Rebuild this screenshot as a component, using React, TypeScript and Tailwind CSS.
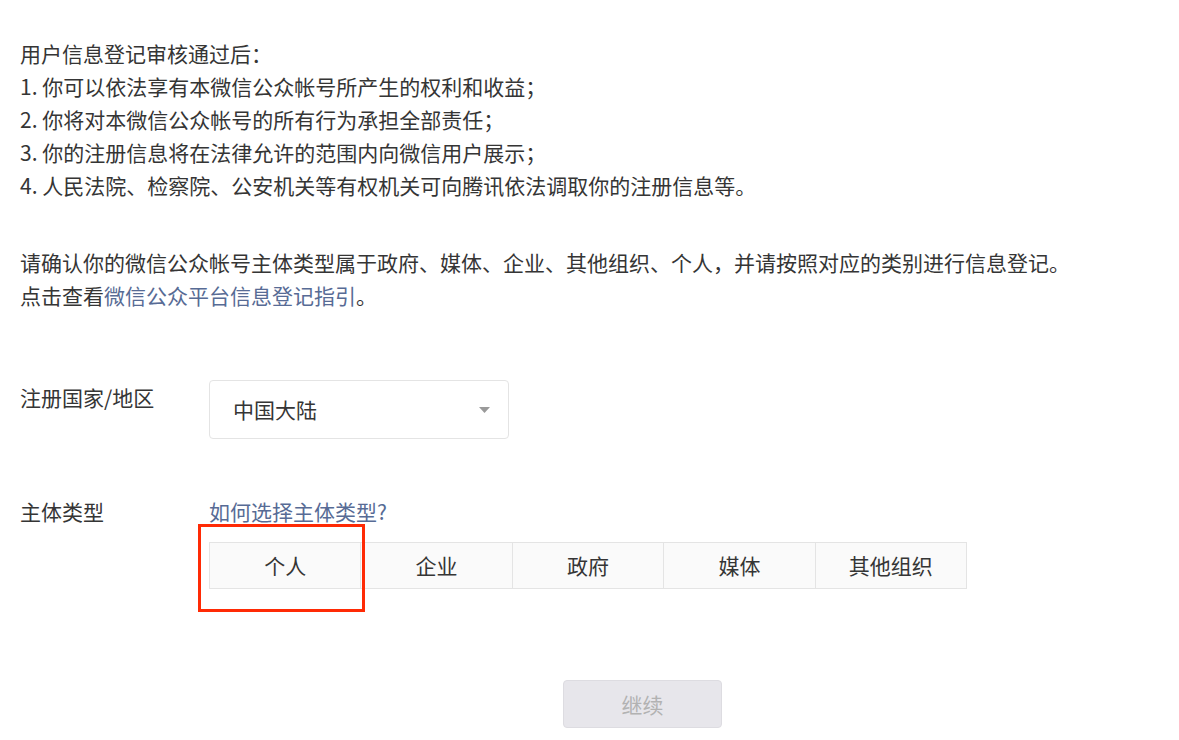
import React from "react";

const tabs = ["个人", "企业", "政府", "媒体", "其他组织"];

export default function App() {
  return (
    <div
      className="w-[1179px] h-[740px] bg-white text-[#353535] overflow-hidden relative"
      style={{ fontFamily: '"Noto Sans CJK SC", "Noto Sans", sans-serif' }}
    >
      <div className="pl-[20px] pt-[37px] text-[21px] leading-[33px]">
        <p>用户信息登记审核通过后：</p>
        <p>1. 你可以依法享有本微信公众帐号所产生的权利和收益；</p>
        <p>2. 你将对本微信公众帐号的所有行为承担全部责任；</p>
        <p>3. 你的注册信息将在法律允许的范围内向微信用户展示；</p>
        <p>4. 人民法院、检察院、公安机关等有权机关可向腾讯依法调取你的注册信息等。</p>

        <p className="mt-[44px]">请确认你的微信公众帐号主体类型属于政府、媒体、企业、其他组织、个人，并请按照对应的类别进行信息登记。</p>
        <p>
          点击查看<span className="text-[#576b95]">微信公众平台信息登记指引</span>。
        </p>

        <div className="mt-[68px] flex">
          <div className="w-[189px] pt-[1px]">注册国家/地区</div>
          <div className="w-[300px] h-[59px] border border-[#e4e4e4] rounded-[4px] flex items-center justify-between pl-[23px] pr-[18px]">
            <span>中国大陆</span>
            <svg width="11" height="6" viewBox="0 0 11 6">
              <path d="M0 0 L11 0 L5.5 6 Z" fill="#9a9a9a" />
            </svg>
          </div>
        </div>

        <div className="mt-[56px] flex">
          <div className="w-[189px]">主体类型</div>
          <div>
            <div className="text-[#576b95]">如何选择主体类型?</div>
            <div className="relative mt-[14px] flex w-[758px]">
              {tabs.map((t) => (
                <div
                  key={t}
                  className="flex-1 h-[47px] border border-[#e4e4e4] bg-[#fafafa] flex items-center justify-center -ml-px first:ml-0"
                >
                  {t}
                </div>
              ))}
              <div className="absolute left-[-11px] top-[-18px] w-[167px] h-[88px] border-[3px] border-[#ff2a05]" />
            </div>
          </div>
        </div>

        <div className="mt-[91px] ml-[543px] w-[159px] h-[48px] rounded-[4px] bg-[#e7e6eb] border border-[#dddce1] flex items-center justify-center text-[#b2b2b2]">
          继续
        </div>
      </div>
    </div>
  );
}
